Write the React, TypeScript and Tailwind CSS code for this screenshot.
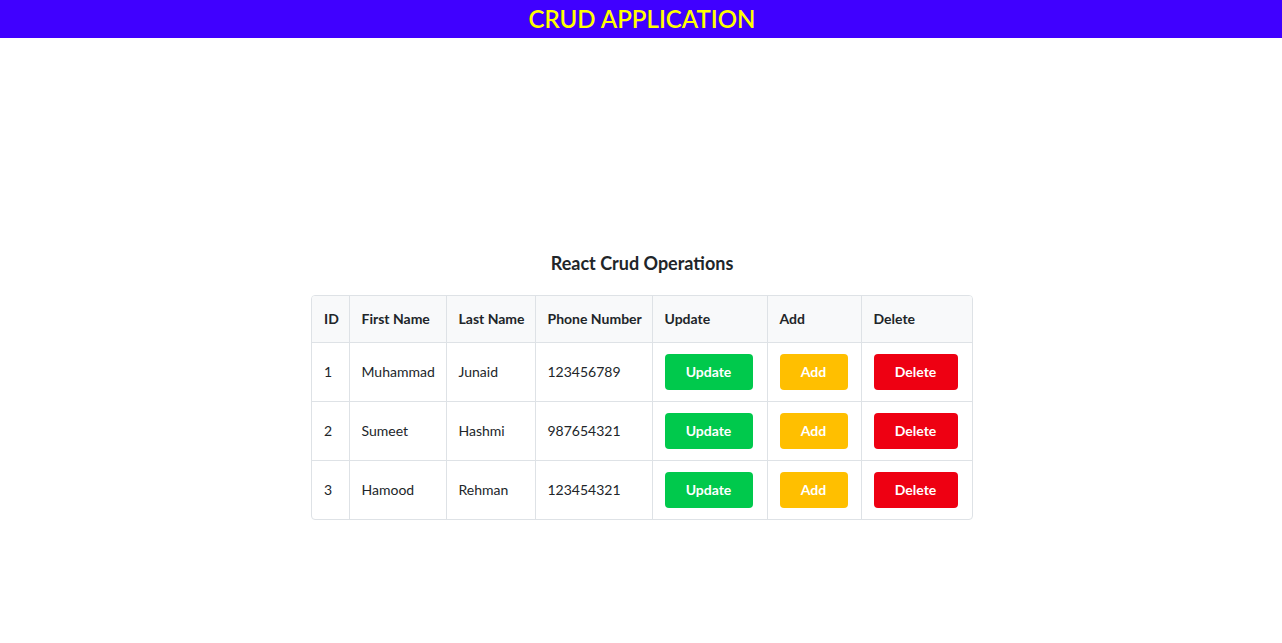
const rows = [
  { id: 1, first: "Muhammad", last: "Junaid", phone: "123456789" },
  { id: 2, first: "Sumeet", last: "Hashmi", phone: "987654321" },
  { id: 3, first: "Hamood", last: "Rehman", phone: "123454321" },
];

export default function App() {
  return (
    <div className="min-h-[823px] bg-white text-[#212529]" style={{ fontFamily: "Lato, 'Open Sans', sans-serif" }}>
      <header className="h-[38px] bg-[#4000ff] flex items-center justify-center">
        <h1 className="text-[24px] font-semibold text-[#ffff00] leading-none ml-[2px]">CRUD APPLICATION</h1>
      </header>

      <main className="flex flex-col items-center pt-[213px]">
        <h2 className="text-[18px] font-bold leading-[24px] mb-[20px] ml-[2px]">React Crud Operations</h2>

        <div className="border border-[#dee2e6] rounded-[4px] overflow-hidden ml-[2px]">
          <table className="border-collapse table-fixed w-[660px] text-[14px] whitespace-nowrap">
            <thead>
              <tr className="bg-[#f8f9fa] h-[46px] font-bold">
                <th className="w-[37px] px-3 text-left">ID</th>
                <th className="w-[97px] px-3 text-left border-l border-[#dee2e6]">First Name</th>
                <th className="w-[89px] px-3 text-left border-l border-[#dee2e6]">Last Name</th>
                <th className="w-[117px] px-3 text-left border-l border-[#dee2e6]">Phone Number</th>
                <th className="w-[115px] px-3 text-left border-l border-[#dee2e6]">Update</th>
                <th className="w-[94px] px-3 text-left border-l border-[#dee2e6]">Add</th>
                <th className="w-[111px] px-3 text-left border-l border-[#dee2e6]">Delete</th>
              </tr>
            </thead>
            <tbody>
              {rows.map((r) => (
                <tr key={r.id} className="h-[59px] border-t border-[#dee2e6]">
                  <td className="px-3">{r.id}</td>
                  <td className="px-3 border-l border-[#dee2e6]">{r.first}</td>
                  <td className="px-3 border-l border-[#dee2e6]">{r.last}</td>
                  <td className="px-3 border-l border-[#dee2e6]">{r.phone}</td>
                  <td className="px-3 border-l border-[#dee2e6]">
                    <button className="h-[36px] w-[88px] rounded-[4px] bg-[#00c94c] text-white font-bold">Update</button>
                  </td>
                  <td className="px-3 border-l border-[#dee2e6]">
                    <button className="h-[36px] w-[68px] rounded-[4px] bg-[#ffbf00] text-white font-bold">Add</button>
                  </td>
                  <td className="px-3 border-l border-[#dee2e6]">
                    <button className="h-[36px] w-[84px] rounded-[4px] bg-[#ee0012] text-white font-bold">Delete</button>
                  </td>
                </tr>
              ))}
            </tbody>
          </table>
        </div>
      </main>
    </div>
  );
}
